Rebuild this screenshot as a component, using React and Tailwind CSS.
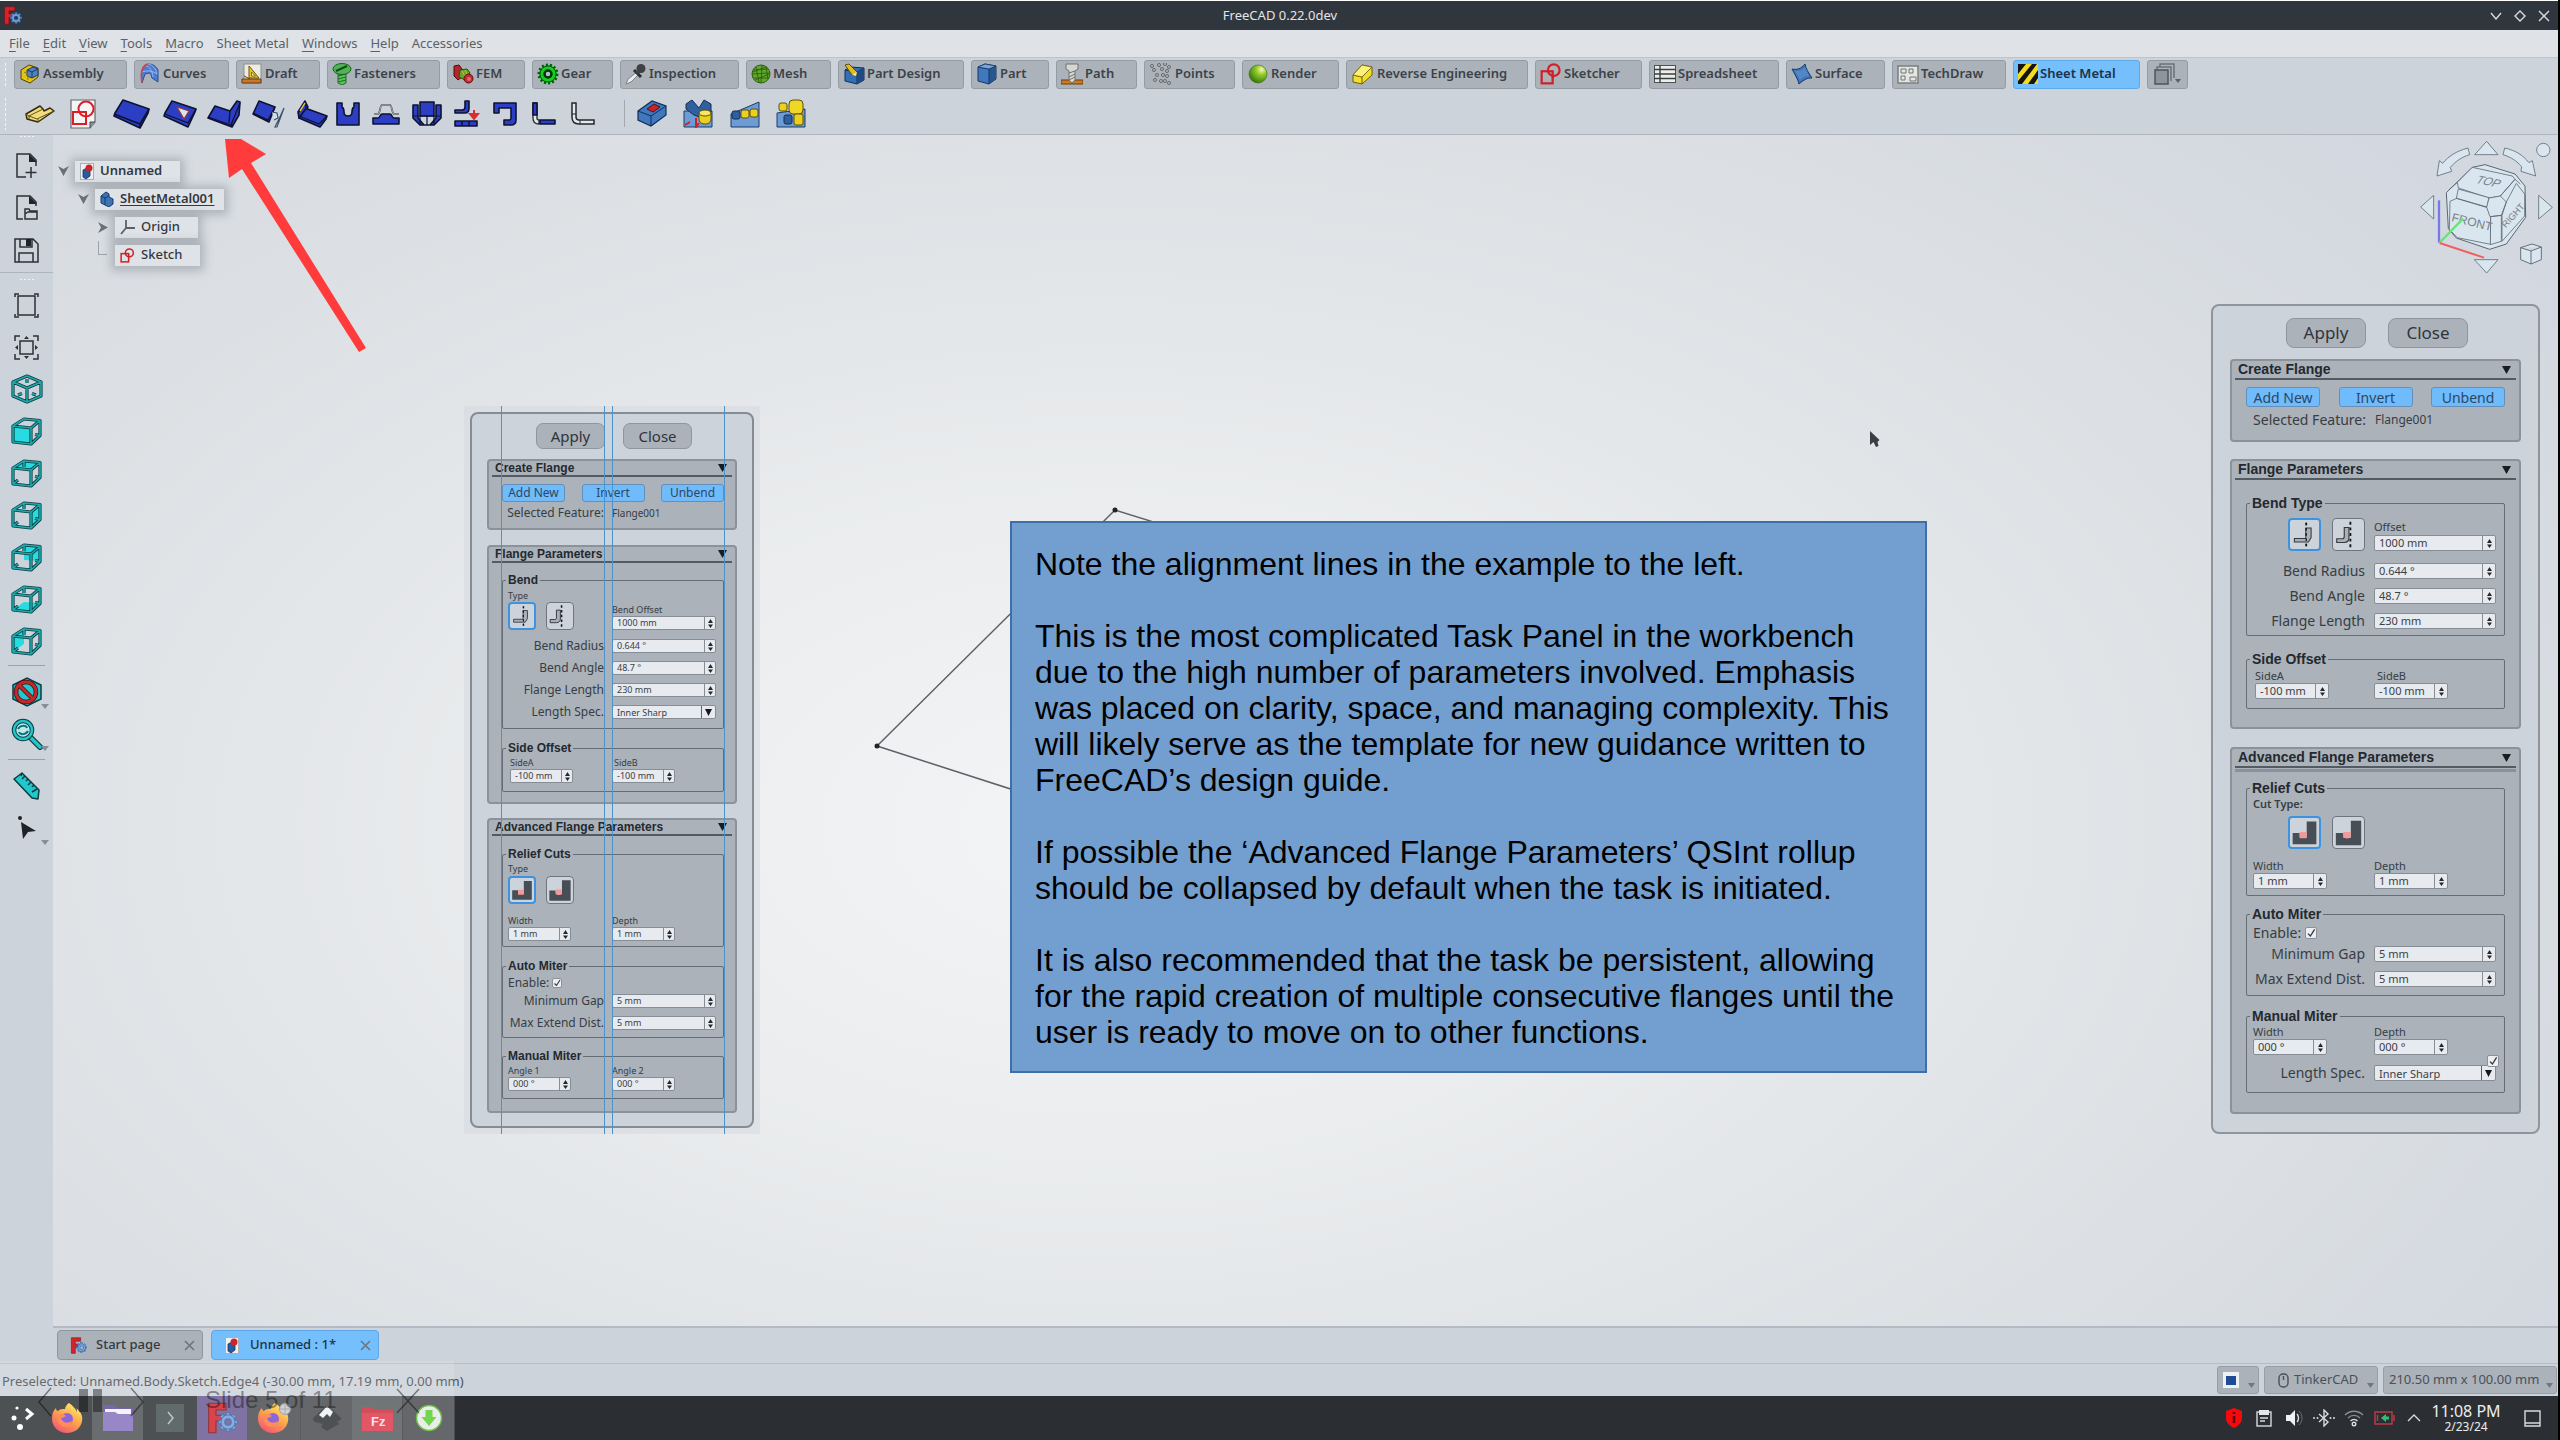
import React from "react";

const NOTO = "font-['Noto_Sans',sans-serif]";
const SANS = "font-['Liberation_Sans',sans-serif]";

function Svg({ w, h, children, className = "" }) {
  return (
    <svg
      width={w}
      height={h}
      viewBox={`0 0 ${w} ${h}`}
      fill="none"
      className={`shrink-0 ${className}`}
      aria-hidden="true"
    >
      {children}
    </svg>
  );
}

/* ---------- shared icons ---------- */

function FreeCadLogo({ size = 20 }) {
  const teeth = [0, 45, 90, 135, 180, 225, 270, 315];
  return (
    <svg width={size} height={size} viewBox="0 0 24 24" fill="none" className="shrink-0" aria-hidden="true">
      <path d="M2 1h13v5H7.500v4H13v4.500H7.500V23H2z" fill="#d3242c" stroke="#7c1218" strokeWidth="0.8" />
      <g transform="translate(16.500 15)">
        {teeth.map((a) => (
          <rect key={a} x="-1.300" y="-7" width="2.600" height="4" fill="#6ea0dc" stroke="#2d5ba0" strokeWidth="0.6" transform={`rotate(${a})`} />
        ))}
        <circle r="3.900" stroke="#2d5ba0" strokeWidth="3.400" />
        <circle r="3.900" stroke="#6ea0dc" strokeWidth="2.200" />
      </g>
    </svg>
  );
}

function DocIcon() {
  return (
    <Svg w={14} h={17}>
      <rect x="0.500" y="0.500" width="13" height="16" fill="#eef0f2" stroke="#aab0b8" />
      <path d="M3 7l4-2 3 2v6l-4 3-3-2z" fill="#2a5a9c" stroke="#17345f" strokeWidth="0.8" />
      <circle cx="9" cy="5" r="3.500" fill="#c8252c" />
    </Svg>
  );
}

function SketchIcon({ size = 20 }) {
  return (
    <svg width={size} height={size} viewBox="0 0 20 20" fill="none" className="shrink-0" aria-hidden="true">
      <rect x="1.500" y="7.500" width="10" height="11" stroke="#cf2027" strokeWidth="2" />
      <circle cx="12.500" cy="6.500" r="5.300" stroke="#cf2027" strokeWidth="2" />
      <path d="M11.500 8v7" stroke="#cf2027" strokeWidth="1.500" />
    </svg>
  );
}

/* ---------- workbench tabs ---------- */

const wbIcons = {
  Assembly: (
    <Svg w={22} h={22}>
      <path d="M2 7l8-5 9 3v9l-8 6-9-4z" fill="#e4c317" stroke="#4d4208" />
      <path d="M8 7l6-3 5 2v6l-6 3-5-2z" fill="#4c83c4" stroke="#1c3a66" />
      <path d="M8 7l5 2 6-3M13 9v6" stroke="#1c3a66" />
      <path d="M5 9l4 2v6" stroke="#8a760c" />
    </Svg>
  ),
  Curves: (
    <Svg w={22} h={22}>
      <path d="M3 20C1 8 4 2 9 1c5 0 8 2 10 6v12l-6-4c-1-3-1-4-3-5l-4 1z" fill="#4c7ccf" stroke="#2b4f98" />
      <path d="M7 3c4 1 6 4 7 11M3 9c5-2 11-1 15 2M9 1c5 1 8 5 9 10" stroke="#9db9ee" />
      <path d="M3 20C1 8 4 2 9 1" stroke="#d0454d" strokeWidth="1.500" />
    </Svg>
  ),
  Draft: (
    <Svg w={22} h={22}>
      <rect x="3" y="1" width="17" height="19" fill="#ecece4" stroke="#8d8f8c" />
      <path d="M8 3v12h10z" fill="#ecc51c" stroke="#6d5706" />
      <path d="M10.500 9v4h4z" fill="#ecece4" stroke="#6d5706" strokeWidth="0.8" />
      <path d="M1 16h19v4H1zM3 13l6 3" fill="#c9772c" stroke="#6b3a0c" />
    </Svg>
  ),
  Fasteners: (
    <Svg w={20} h={22}>
      <path d="M6 9h8v11l-4 2-4-2z" fill="#58c35c" stroke="#1e6b23" />
      <path d="M6 13l8-2M6 16l8-2M6 19l8-2" stroke="#1e6b23" />
      <ellipse cx="10" cy="6" rx="9" ry="5.500" fill="#4fb454" stroke="#1b5f20" />
      <path d="M4 8l11-5" stroke="#16491a" strokeWidth="2" />
    </Svg>
  ),
  FEM: (
    <Svg w={22} h={22}>
      <path d="M2 3l5-1 3 4v8l-4 3-4-4z" fill="#b3262c" stroke="#4e0d10" />
      <path d="M8 7l7-1 3 4-5 7-6-3z" fill="#66a52d" stroke="#2c4c10" />
      <path d="M10 8l4 7M13 7l3 6" stroke="#c9c52a" />
      <circle cx="16.500" cy="15.500" r="4.500" fill="#c62a30" stroke="#5a1013" />
      <circle cx="17" cy="16" r="2" fill="#e0686c" />
    </Svg>
  ),
  Gear: (
    <Svg w={22} h={22}>
      <circle cx="11" cy="11" r="9" fill="#12c51d" stroke="#075b0c" strokeWidth="3" strokeDasharray="2 2" />
      <circle cx="11" cy="11" r="8" fill="#14cf20" stroke="#075b0c" />
      <circle cx="11" cy="11" r="3.500" fill="#b6bdc5" stroke="#03330a" strokeWidth="2.500" />
    </Svg>
  ),
  Inspection: (
    <Svg w={22} h={22}>
      <path d="M12 9L3 16l-2 5 5-2 8-8z" fill="#e9ebec" stroke="#7c8287" />
      <path d="M9 7l7 7" stroke="#2a2e30" strokeWidth="3" />
      <circle cx="16" cy="5.500" r="4.500" fill="#3d4245" />
      <path d="M12 7l3 3" stroke="#3d4245" strokeWidth="5" />
    </Svg>
  ),
  Mesh: (
    <Svg w={20} h={20}>
      <circle cx="10" cy="10" r="9" fill="#5fa82c" stroke="#2f5c12" />
      <path d="M2 6l15-1M1 10l18-1M2 14l16 0M5 3l3 15M11 1l-1 18M15 3l2 12M2 8l13-5M4 16l14-6" stroke="#315f13" strokeWidth="0.9" />
    </Svg>
  ),
  "Part Design": (
    <Svg w={22} h={22}>
      <path d="M2 7l6-3 13 1v12l-7 4-12-3z" fill="#346fb5" stroke="#122f58" />
      <path d="M2 7l12 2 7-4M14 9v12" stroke="#122f58" />
      <path d="M14 9l7-4v12l-7 4z" fill="#1f4a83" />
      <path d="M2 2l4-1 8 8-1 4-4-1z" fill="#e3bd20" stroke="#5d4a06" />
      <path d="M9 12l4 1 1-4" fill="#eee3c0" />
    </Svg>
  ),
  Part: (
    <Svg w={22} h={22}>
      <path d="M2 4l7-3 11 2v13l-7 5-11-3z" fill="#3f78bd" stroke="#163763" />
      <path d="M13 6l7-3v13l-7 5z" fill="#28568f" />
      <path d="M2 4l11 2 7-3M13 6v15" stroke="#163763" />
      <path d="M2 4l7-3 11 2-7 3z" fill="#7aa6dc" stroke="#163763" strokeWidth="0.8" />
    </Svg>
  ),
  Path: (
    <Svg w={22} h={22}>
      <path d="M0 17h22v4H0z" fill="#cc7a23" stroke="#6b3c09" />
      <path d="M5 1h12v5l-3 2v9l-3 3-3-3V8L5 6z" fill="#d6d7d2" stroke="#6f736e" />
      <path d="M8 10l6-2M8 14l6-3M8 17l6-3" stroke="#6f736e" />
    </Svg>
  ),
  Points: (
    <Svg w={24} h={22}>
      {[[3, 3], [10, 2], [16, 1], [20, 4], [5, 7], [13, 6], [18, 8], [8, 12], [14, 12], [18, 13], [6, 17], [12, 18], [16, 18], [20, 20]].map(([x, y]) => (
        <circle key={`${x}-${y}`} cx={x} cy={y} r="1.600" fill="#a6acb0" stroke="#6b7175" />
      ))}
    </Svg>
  ),
  Render: (
    <Svg w={22} h={20}>
      <defs>
        <radialGradient id="renderBall" cx="0.7" cy="0.25" r="0.85">
          <stop offset="0" stopColor="#fff3b0" />
          <stop offset="0.35" stopColor="#8fce2b" />
          <stop offset="1" stopColor="#2d6a07" />
        </radialGradient>
      </defs>
      <circle cx="11" cy="10" r="9" fill="url(#renderBall)" stroke="#3a6b12" strokeWidth="0.6" />
    </Svg>
  ),
  "Reverse Engineering": (
    <Svg w={24} h={22}>
      <path d="M2 12l9-10 10 2v8l-10 9-9-2z" fill="#f3df2a" stroke="#6b6108" />
      <path d="M2 12l9 2 10-10M11 14v7" stroke="#6b6108" />
      <path d="M2 12l9-10 10 2-10 10z" fill="#fbf07a" stroke="#6b6108" strokeWidth="0.8" />
    </Svg>
  ),
  Sketcher: <SketchIcon size={22} />,
  Spreadsheet: (
    <Svg w={22} h={18}>
      <rect x="0.500" y="0.500" width="21" height="17" fill="#eceeec" stroke="#4c5355" />
      <path d="M0 4.500h22M0 9h22M0 13.500h22M6 0v18" stroke="#394042" strokeWidth="1.400" />
    </Svg>
  ),
  Surface: (
    <Svg w={22} h={22}>
      <path d="M1 6c5 1 9 0 13-5 1 5 3 8 7 14-5 0-7 1-13 6-1-5-4-9-7-15z" fill="#3e74b8" stroke="#173a6b" />
      <path d="M4 8c5 0 7-1 10-4l4 9c-4 0-6 1-9 4z" fill="#6898d3" opacity="0.5" />
    </Svg>
  ),
  TechDraw: (
    <Svg w={22} h={19}>
      <rect x="1" y="1" width="20" height="17" fill="#e5e6e1" stroke="#7a7f80" strokeWidth="1.500" />
      <path d="M4 4h5v4H4zM12 4h4v4h-4zM4 11h4v4H4zM13 12h6v4h-6z" stroke="#6f7475" />
    </Svg>
  ),
  "Sheet Metal": (
    <Svg w={20} h={20}>
      <rect width="20" height="20" fill="#161510" />
      <path d="M0 10L8 0h6L0 17zM4 20L19 0h1v6L10 20zM16 20l4-6v6z" fill="#f2dc1d" />
    </Svg>
  ),
};

const workbenches = [
  ["Assembly", "w-[113px]"],
  ["Curves", "w-[95px]"],
  ["Draft", "w-[84px]"],
  ["Fasteners", "w-[113px]"],
  ["FEM", "w-[78px]"],
  ["Gear", "w-[81px]"],
  ["Inspection", "w-[119px]"],
  ["Mesh", "w-[85px]"],
  ["Part Design", "w-[126px]"],
  ["Part", "w-[78px]"],
  ["Path", "w-[81px]"],
  ["Points", "w-[91px]"],
  ["Render", "w-[97px]"],
  ["Reverse Engineering", "w-[182px]"],
  ["Sketcher", "w-[107px]"],
  ["Spreadsheet", "w-[130px]"],
  ["Surface", "w-[99px]"],
  ["TechDraw", "w-[114px]"],
  ["Sheet Metal", "w-[127px]"],
];

/* ---------- tool bar ---------- */

const B = { fill: "#2c3fc4", stroke: "#0d1233", strokeWidth: 1.6, strokeLinejoin: "round" };

const tools = [
  ["Make base wall", "w-[44px]", (
    <Svg w={30} h={26}>
      <path d="M1 13l14-8 3 3 1 2 6-3 4 3-16 11-11-3z" fill="#f3dc7e" stroke="#332b0d" strokeWidth="1.500" strokeLinejoin="round" />
      <path d="M1 13l3 2 14-7M4 15l8 3 17-8M4 15v3M13 18v3" stroke="#5e5120" />
    </Svg>
  )],
  ["New sketch", "w-[42px]", (
    <Svg w={26} h={30}>
      <path d="M1 1h24v22l-5 6H1z" fill="#f4f5f6" stroke="#63686d" strokeWidth="1.200" />
      <path d="M25 23h-5v6" fill="#8d9398" stroke="#42474b" />
      <rect x="3" y="13" width="13" height="12" stroke="#da1f26" strokeWidth="2" />
      <circle cx="16" cy="10" r="7.500" stroke="#da1f26" strokeWidth="2" />
      <path d="M16 13v9" stroke="#da1f26" strokeWidth="1.500" />
    </Svg>
  )],
  ["Make wall", "w-[54px]", (
    <Svg w={38} h={30}>
      <path d="M11 1l26 9-1 4-8 15-26-12 1-3z" {...B} />
      <path d="M2 15l26 10 9-15M28 25v4" stroke="#0d1233" strokeWidth="1.500" />
    </Svg>
  )],
  ["Cut", "w-[44px]", (
    <Svg w={34} h={28}>
      <path d="M9 1l24 8-1 3-7 15-24-11 1-3z" {...B} />
      <path d="M2 14l23 9 8-14" stroke="#0d1233" strokeWidth="1.300" />
      <path d="M14 7l12 4-5 8z" fill="#dfe3e8" stroke="#8a3a3c" strokeWidth="1.200" />
    </Svg>
  )],
  ["Make flange", "w-[44px]", (
    <Svg w={34} h={28}>
      <path d="M8 6l15 5 7-10 3 1-1 13-7 12L1 18z" {...B} />
      <path d="M23 11l-1 12M1 17l23 8 9-22M25 24v3" stroke="#0d1233" strokeWidth="1.300" />
    </Svg>
  )],
  ["Extend face", "w-[46px]", (
    <Svg w={34} h={28}>
      <path d="M7 1l16 6-6 15L1 14z" {...B} />
      <path d="M1 13l15 7 7-13" stroke="#0d1233" strokeWidth="1.200" />
      <path d="M20 12l5 1 1 5-4 2M32 8l-5 11-4 8 2 0z" fill="#cfe0ee" stroke="#3a5166" strokeWidth="1.200" />
    </Svg>
  )],
  ["Fold wall", "w-[40px]", (
    <Svg w={31} h={28}>
      <path d="M8 8l22 8-1 3-6 8L2 18z" {...B} />
      <path d="M2 18L1 12 8 1l3 6-3 3z" {...B} />
      <path d="M2 16l20 8 8-8M2 12L8 3l1 5" stroke="#0d1233" strokeWidth="1.200" />
      <path d="M3 11l5-8" stroke="#e2c33b" strokeWidth="1.500" />
    </Svg>
  )],
  ["Unfold", "w-[32px]", (
    <Svg w={24} h={24}>
      <path d="M1 1h5v4c2 1 2 3 2 5 0 3 1 4 4 4s4-1 4-4c0-2 0-4 2-5V1h5v22H1z" {...B} />
    </Svg>
  )],
  ["Corner relief", "w-[44px]", (
    <Svg w={28} h={22}>
      <path d="M1 21v-6h5c2 0 2-4 4-4h8c2 0 2 4 4 4h5v6z" {...B} />
      <path d="M2 11h4c2 0 2-9 4-9h8c2 0 2 9 4 9h5" stroke="#20242c" strokeWidth="1.600" />
      <path d="M2 11h4c2 0 2-9 4-9h8c2 0 2 9 4 9h5" stroke="#e9edf2" strokeWidth="0.7" />
    </Svg>
  )],
  ["Relief", "w-[38px]", (
    <Svg w={30} h={25}>
      <path d="M8 1h14v14H8zM1 4h5v13l6 7h6l6-7V4h5v13l-7 7H8l-7-7z" {...B} />
      <path d="M1 15h28M8 15v9M22 15v9M15 15v9" stroke="#0d1233" strokeWidth="1.200" />
    </Svg>
  )],
  ["Make junction", "w-[42px]", (
    <Svg w={26} h={27}>
      <path d="M11 1h4v7c0 3-1 5-4 5H1v-3h7c2 0 3-1 3-3z" {...B} />
      <path d="M1 21h22v5H1zM8 21v5M15 21v5" {...B} />
      <path d="M20 10v9M16 14l4 5 4-5z" fill="#df2a2f" stroke="#df2a2f" strokeWidth="2" />
    </Svg>
  )],
  ["Make bend", "w-[34px]", (
    <Svg w={24} h={24}>
      <path d="M1 1h22v17c0 3-2 5-5 5h-7v-5h5c2 0 2-1 2-2V6H6v5H1z" {...B} />
    </Svg>
  )],
  ["Sketch on sheet", "w-[44px]", (
    <Svg w={24} h={24}>
      <path d="M1 1h4v15c0 2 1 2 2 2v4c-4 0-6-2-6-6z" fill="#e4e8ee" stroke="#30343a" strokeWidth="1.400" />
      <path d="M8 18h15v4H8zM1 1h4v12H1z" {...B} />
    </Svg>
  )],
  ["Extrude", "w-[34px]", (
    <Svg w={24} h={24}>
      <path d="M1 1h4v14c0 2 1 3 3 3h15v4H8c-5 0-7-2-7-7z" fill="#e4e8ee" stroke="#23272d" strokeWidth="1.500" />
      <path d="M1 12h4M9 18v4" stroke="#23272d" />
    </Svg>
  )],
];

const partTools = [
  ["Pocket", "w-[44px]", (
    <Svg w={30} h={27}>
      <path d="M1 11L15 1l14 5v9L14 26 1 20z" fill="#3f78bd" stroke="#122f58" strokeWidth="1.200" />
      <path d="M1 11l13 5L29 6M14 16v10" stroke="#122f58" />
      <path d="M10 9l7-5 6 3-7 5z" fill="#c9222a" stroke="#5a0e12" />
    </Svg>
  )],
  ["Mirrored", "w-[48px]", (
    <Svg w={30} h={29}>
      <path d="M1 12h28v16H1z" fill="#6c9cd3" stroke="#1c3a66" />
      <path d="M3 5l6-4 7 8 5-8 7 4v8l-9 6-8-3-8-6z" fill="#2f5f9f" stroke="#122f58" />
      <rect x="16" y="11" width="12" height="14" rx="5" fill="#ecd021" stroke="#5d5006" />
      <ellipse cx="22" cy="14" rx="6" ry="3" fill="#f7e56a" stroke="#5d5006" />
      <path d="M13 19v9l3-4M2 26l5-3" stroke="#cf2027" strokeWidth="2" />
    </Svg>
  )],
  ["Linear pattern", "w-[46px]", (
    <Svg w={30} h={28}>
      <path d="M1 27V14L29 2v25z" fill="#6c9cd3" stroke="#1c3a66" />
      <rect x="2" y="11" width="8" height="8" rx="2" fill="#2f5f9f" stroke="#122f58" />
      <rect x="11" y="10" width="8" height="8" rx="2" fill="#ecd021" stroke="#5d5006" />
      <rect x="20" y="9" width="8" height="8" rx="2" fill="#ecd021" stroke="#5d5006" />
    </Svg>
  )],
  ["Multi transform", "w-[46px]", (
    <Svg w={30} h={29}>
      <path d="M1 28V14l28-4v18z" fill="#6c9cd3" stroke="#1c3a66" />
      <rect x="13" y="1" width="14" height="14" rx="4" fill="#f0d625" stroke="#5d5006" />
      <rect x="3" y="4" width="8" height="8" rx="2" fill="#ecd021" stroke="#5d5006" />
      <rect x="8" y="16" width="8" height="9" rx="2" fill="#2f5f9f" stroke="#122f58" />
      <rect x="18" y="15" width="9" height="11" rx="2" fill="#ecd021" stroke="#5d5006" />
    </Svg>
  )],
];

/* ---------- side bar ---------- */

function ViewCubeIcon({ face }) {
  const faces = {
    front: "M2 10l18 2v16L2 26z",
    top: "M2 10L13 3l16 1-9 8z",
    right: "M20 12l9-7v15l-9 8z",
    rear: "M13 4l16 1v14l-16-1z",
    bottom: "M2 26l11-8 16 1-9 9z",
    left: "M2 10l11-7v15L2 26z",
  };
  const solid = face === "front";
  const edges = `M2 10l11-7 16 1.500v15L20 28 2 26zM2 10l18 2v16M20 12l9-7.500${solid ? "" : "M13 3v6M2 26l5-4"}M29 19.500l-5-1`;
  return (
    <Svg w={32} h={31}>
      <path d={faces[face]} fill="#27dbe0" />
      <path d={edges} stroke="#0b3d40" strokeWidth="3.200" strokeLinejoin="round" />
      <path d={edges} stroke="#1fa9ad" strokeWidth="1.600" strokeLinejoin="round" />
    </Svg>
  );
}

function IsoIcon() {
  const d = "M2 9l14-6 14 6v14l-14 6L2 23zM2 9l14 6 14-6M16 15v14M16 6v4M7 22l4-1.500M25 22l-4-1.500";
  return (
    <Svg w={32} h={32}>
      <path d={d} stroke="#0b3d40" strokeWidth="3.200" strokeLinejoin="round" />
      <path d={d} stroke="#1fa9ad" strokeWidth="1.600" strokeLinejoin="round" />
    </Svg>
  );
}

const K = { stroke: "#2c3136", strokeWidth: 1.5 };

const sideGroups = [
  [
    ["New", <Svg w={22} h={26}><path d="M10 24H1V1h13l6 6v6" {...K} /><path d="M13 1l8 8h-8z" fill="#1f2327" /><path d="M15 14v11M9.500 19.500h11" {...K} /></Svg>],
    ["Open", <Svg w={22} h={26}><path d="M7 24H1V1h13l6 6v4" {...K} /><path d="M13 1l8 8h-8z" fill="#1f2327" /><path d="M9 14h4l1 2h7v8H9zM9 19l3-2h9" {...K} /></Svg>],
    ["Save", <Svg w={25} h={25}><path d="M1 1h18l5 5v18H1zM6 1v8h12V1M5 24v-9h14v9" {...K} /><path d="M12 1h5v7h-5z" fill="#1f2327" /></Svg>],
  ],
  [
    ["Fit all", <Svg w={25} h={25}><rect x="4" y="3" width="17" height="19" {...K} /><path d="M1 4V1h4M20 1h4v3M1 21v3h4M20 24h4v-3" {...K} /></Svg>],
    ["Fit selection", <Svg w={25} h={25}><rect x="6" y="6" width="13" height="13" {...K} /><path d="M1 6V1h5M19 1h5v5M1 19v5h5M19 24h5v-5" {...K} /><path d="M10 4l2.500-3L15 4zM10 21l2.500 3 2.500-3zM4 10l-3 2.500L4 15zM21 10l3 2.500-3 2.500z" fill="#2c3136" /></Svg>],
    ["Isometric", <IsoIcon />],
    ["Front", <ViewCubeIcon face="front" />],
    ["Top", <ViewCubeIcon face="top" />],
    ["Right", <ViewCubeIcon face="right" />],
    ["Rear", <ViewCubeIcon face="rear" />],
    ["Bottom", <ViewCubeIcon face="bottom" />],
    ["Left", <ViewCubeIcon face="left" />],
  ],
  [
    ["Draw style", <Svg w={32} h={32}><path d="M2 9l14-7 14 7v14l-14 7L2 23z" fill="#22c7cc" stroke="#0b3d40" strokeWidth="1.500" /><circle cx="15" cy="16" r="10" stroke="#4a0a0c" strokeWidth="4.500" /><path d="M8 9l14 14" stroke="#4a0a0c" strokeWidth="4.500" /><circle cx="15" cy="16" r="10" stroke="#c3282d" strokeWidth="3" /><path d="M8 9l14 14" stroke="#c3282d" strokeWidth="3" /></Svg>, true],
    ["Zoom", <Svg w={32} h={32}><path d="M19 19l10 10" stroke="#0b3d40" strokeWidth="6" strokeLinecap="round" /><path d="M19 19l10 10" stroke="#22c7cc" strokeWidth="3.500" strokeLinecap="round" /><circle cx="12" cy="12" r="9" fill="#b9e9ec" stroke="#0b3d40" strokeWidth="4.500" /><circle cx="12" cy="12" r="9" stroke="#22c7cc" strokeWidth="2.500" /><path d="M7 11c2-4 8-4 9-1M17 13c-2 4-8 4-9 1" stroke="#0f7074" strokeWidth="2" /></Svg>, true],
  ],
  [
    ["Measure", <Svg w={28} h={30}><path d="M1 8l8-6 17 17-1 9-6-1z" fill="#22c7cc" stroke="#0b3d40" strokeWidth="1.500" strokeLinejoin="round" /><path d="M9 2l-1 3M12 5l-3 3M15 8l-2 2M18 11l-3 3M21 14l-2 2M24 18l-5 3" stroke="#0b3d40" strokeWidth="1.500" /></Svg>],
    ["Select", <Svg w={20} h={26}><circle cx="3" cy="3" r="2" fill="#1f2327" /><path d="M4 7l15 9-8 1-5 7z" fill="#1f2327" /></Svg>, true],
  ],
];

function Grip({ vertical }) {
  return vertical ? (
    <span className="my-1 w-[3px] self-stretch bg-[radial-gradient(#f1f3f5_1px,transparent_1px)] bg-[length:3px_5px]" />
  ) : (
    <span className="mx-auto h-[4px] w-4 bg-[radial-gradient(#f1f3f5_1px,transparent_1px)] bg-[length:4px_3px]" />
  );
}

const groupGap = ["", "mt-[1px]", "mt-[3px]", "mt-[4px]"];

function SideBar() {
  return (
    <nav aria-label="View tools" className="flex w-[53px] shrink-0 flex-col bg-[#cdd3db]">
      {sideGroups.map((group, g) => (
        <div key={g} className={groupGap[g]}>
          {g > 0 && <div className={g === 1 ? "mb-[5px] h-px bg-[#aeb5be]" : "mx-2 mb-[5px] h-px bg-[#9aa2ab]"} />}
          {g < 2 && (
            <div className="flex h-[6px]">
              <Grip />
            </div>
          )}
          {g === 0 && <div className="h-[4px]" />}
          {group.map(([name, icon, menu]) => (
            <button key={name} type="button" aria-label={name} className="relative flex h-[42px] w-[53px] items-center justify-center">
              {icon}
              {menu && (
                <Svg w={8} h={5} className="absolute right-1 bottom-1">
                  <path d="M0 0h8L4 5z" fill="#868e97" />
                </Svg>
              )}
            </button>
          ))}
        </div>
      ))}
    </nav>
  );
}

/* ---------- task panels ---------- */

const LARGE = {
  action: "h-[30px] w-[80px] rounded-[8px] text-[17px]",
  title: "text-[14px] leading-[17px]",
  blue: "h-[20px] w-[74px] text-[14px]",
  label: "text-[14px] leading-[16px]",
  small: "text-[11px] leading-[14px]",
  input: "h-[16px] text-[11px]",
  spin: "w-[13px]",
  half: "w-[74px]",
  icon: "size-[33px]",
  legend: "text-[14px] leading-[16px]",
  check: "size-[12px]",
  cols: "grid grid-cols-[118px_1fr] gap-x-[9px] pr-[8px]",
};

const COMPACT = {
  action: "h-[26px] w-[69px] rounded-[7px] text-[15px]",
  title: "text-[12px] leading-[14px]",
  blue: "h-[18px] w-[63px] text-[12px]",
  label: "text-[12px] leading-[14px]",
  small: "text-[9px] leading-[12px]",
  input: "h-[14px] text-[9px]",
  spin: "w-[11px]",
  half: "w-[63px]",
  icon: "size-[28px]",
  legend: "text-[12px] leading-[14px]",
  check: "size-[10px]",
  cols: "grid grid-cols-[101px_1fr] gap-x-[8px] pr-[7px]",
};

function Spin({ s, id, label, value, className = "" }) {
  return (
    <span className={`flex overflow-hidden rounded-[2px] border border-[#868d95] bg-[#e7eaee] ${s.input} ${className}`}>
      <input id={id} aria-label={label} defaultValue={value} className="w-0 min-w-0 flex-1 bg-transparent pl-[4px] text-[#3a4046] outline-none" />
      <button type="button" aria-label={`Step ${label}`} className={`flex items-center justify-center border-l border-[#868d95] ${s.spin}`}>
        <Svg w={5} h={9}>
          <path d="M0 4l2.500-4L5 4zM0 5.500h5L2.500 9z" fill="#23282d" />
        </Svg>
      </button>
    </span>
  );
}

function Drop({ s, id }) {
  return (
    <span className={`relative flex rounded-[2px] border border-[#868d95] bg-[#e7eaee] ${s.input}`}>
      <select id={id} className="w-full appearance-none bg-transparent pl-[4px] text-[#3a4046] outline-none">
        <option>Inner Sharp</option>
      </select>
      <span className="pointer-events-none absolute inset-y-0 right-0 flex w-[14px] items-center justify-center border-l border-[#5b6269]">
        <Svg w={7} h={7}>
          <path d="M0 0h7L3.500 7z" fill="#15191d" />
        </Svg>
      </span>
    </span>
  );
}

function Check({ s, id, label }) {
  return (
    <span className={`relative inline-flex ${s.check}`}>
      <input id={id} type="checkbox" defaultChecked aria-label={label} className="peer size-full appearance-none rounded-[2px] border border-[#8a9199] bg-[#eceef1]" />
      <svg viewBox="0 0 10 10" fill="none" className="pointer-events-none absolute inset-0 size-full" aria-hidden="true">
        <path d="M2.500 5.500l2 2 3.500-5.500" stroke="#30363b" strokeWidth="1.100" />
      </svg>
    </span>
  );
}

function Row({ s, id, label, children, className = "" }) {
  return (
    <div className={`${s.cols} items-center ${className}`}>
      <label htmlFor={id} className={`text-right whitespace-nowrap ${s.label}`}>{label}</label>
      {children}
    </div>
  );
}

function Pair({ s, id, a, b, va, vb, className = "", left = "pl-[6px]", right = "" }) {
  return (
    <div className={`${s.cols} ${className}`}>
      <div className={`flex flex-col ${left}`}>
        <label htmlFor={`${id}-a`} className={s.small}>{a}</label>
        <Spin s={s} id={`${id}-a`} label={a} value={va} className={s.half} />
      </div>
      <div className="flex flex-col">
        <label htmlFor={`${id}-b`} className={`${s.small} ${right}`}>{b}</label>
        <Spin s={s} id={`${id}-b`} label={b} value={vb} className={s.half} />
      </div>
    </div>
  );
}

function Box({ s, title, children, className = "" }) {
  return (
    <fieldset className={`min-w-0 rounded-[2px] border border-[#646c75] ${className}`}>
      <legend className={`ml-[3px] px-[2px] font-bold text-[#23292f] ${SANS} ${s.legend}`}>{title}</legend>
      {children}
    </fieldset>
  );
}

function Rollup({ s, title, children, className = "" }) {
  return (
    <section className={`rounded-[4px] border-2 border-[#8b929a] bg-[#abb2ba] ${className}`}>
      <h2 className={`mx-[3px] flex items-center justify-between border-b-2 border-[#525a62] pr-[5px] pl-[3px] font-bold text-[#23292f] ${SANS} ${s.title}`}>
        {title}
        <Svg w={9} h={8}>
          <path d="M0 0h9L4.500 8z" fill="#181d22" />
        </Svg>
      </h2>
      {children}
    </section>
  );
}

function BendIcon({ outside }) {
  return (
    <svg viewBox="0 0 33 33" fill="none" className="size-full" aria-hidden="true">
      <path d="M18.500 3v27" stroke="#14181c" strokeWidth="2" strokeDasharray="3 3" />
      {outside ? (
        <path d="M4 21h6c2 0 2-1 2-3V9h5v11c0 3-2 5-5 5H4z" fill="#a9b0b8" stroke="#33383d" strokeWidth="1.200" />
      ) : (
        <path d="M5 21h13V9h6v11l-3 5H5z" fill="#a9b0b8" stroke="#33383d" strokeWidth="1.200" />
      )}
      {!outside && <path d="M18.500 3v27" stroke="#14181c" strokeWidth="1.500" strokeDasharray="3 3" />}
    </svg>
  );
}

function CutIcon({ round }) {
  return (
    <svg viewBox="0 0 33 33" fill="none" className="size-full" aria-hidden="true">
      <path d="M19 4h11v26H3V17h8v5h8z" fill="#474e55" />
      {round ? (
        <path d="M11 16h8v3a4 4 0 0 1-8 0z" fill="#f09a9b" />
      ) : (
        <path d="M11 16h8v7h-8z" fill="#f09a9b" />
      )}
    </svg>
  );
}

function IconToggle({ s, label, active, children }) {
  return (
    <button
      type="button"
      aria-label={label}
      aria-pressed={!!active}
      className={`overflow-hidden rounded-[4px] bg-[#cdd3db] ${s.icon} ${active ? "border-2 border-[#3d93e0]" : "border border-[#6e757d]"}`}
    >
      {children}
    </button>
  );
}

function Blues({ s }) {
  return ["Add New", "Invert", "Unbend"].map((t) => (
    <button key={t} type="button" className={`flex items-center justify-center rounded-[3px] border border-[#648fbb] bg-[#70bbfb] text-[#2b4763] ${s.blue}`}>
      {t}
    </button>
  ));
}

function Actions({ s }) {
  return ["Apply", "Close"].map((t) => (
    <button key={t} type="button" className={`flex items-center justify-center border border-[#8f969e] bg-[#abb2ba] text-[#2f353b] ${s.action}`}>
      {t}
    </button>
  ));
}

function LargePanel() {
  const s = LARGE;
  return (
    <form className={`w-[329px] rounded-[8px] border-2 border-[#8e959d] bg-[#cdd3db] px-[17px] pt-[12px] pb-[18px] text-[#373d43] ${NOTO}`}>
      <div className="flex justify-center gap-[22px] pl-[3px]">
        <Actions s={s} />
      </div>
      <Rollup s={s} title="Create Flange" className="mt-[11px] pb-[12px]">
        <div className="mt-[7px] flex justify-between px-[14px]">
          <Blues s={s} />
        </div>
        <div className={`${s.cols} mt-[5px] ml-[16px] items-center`}>
          <span className={`text-right whitespace-nowrap ${s.label}`}>Selected Feature:</span>
          <span className="text-[12px] leading-[16px]">Flange001</span>
        </div>
      </Rollup>
      <Rollup s={s} title="Flange Parameters" className="mt-[17px] pb-[18px]">
        <Box s={s} title="Bend Type" className="mx-[14px] mt-[15px] pb-[6px]">
          <div className={`${s.cols} mt-[7px] items-end`}>
            <div className="flex justify-end gap-[11px]">
              <IconToggle s={s} label="Material inside" active><BendIcon /></IconToggle>
              <IconToggle s={s} label="Material outside"><BendIcon outside /></IconToggle>
            </div>
            <div className="flex flex-col gap-[1px]">
              <label htmlFor="r-offset" className={s.small}>Offset</label>
              <Spin s={s} id="r-offset" label="Offset" value="1000 mm" />
            </div>
          </div>
          <Row s={s} id="r-radius" label="Bend Radius" className="mt-[12px]"><Spin s={s} id="r-radius" label="Bend Radius" value="0.644 °" /></Row>
          <Row s={s} id="r-angle" label="Bend Angle" className="mt-[9px]"><Spin s={s} id="r-angle" label="Bend Angle" value="48.7 °" /></Row>
          <Row s={s} id="r-length" label="Flange Length" className="mt-[9px]"><Spin s={s} id="r-length" label="Flange Length" value="230 mm" /></Row>
        </Box>
        <Box s={s} title="Side Offset" className="mx-[14px] mt-[15px] pb-[9px]">
          <Pair s={s} id="r-side" a="SideA" b="SideB" va="-100 mm" vb="-100 mm" className="mt-[2px]" left="pl-[8px]" right="pl-[3px]" />
        </Box>
      </Rollup>
      <Rollup s={s} title="Advanced Flange Parameters" className="mt-[18px] pb-[19px]">
        <div className="mx-[3px] mt-px h-[3px] bg-[#89919a]" />
        <Box s={s} title="Relief Cuts" className="mx-[14px] mt-[8px] pb-[6px]">
          <div className={`mt-px ml-[6px] font-semibold ${s.small}`}>Cut Type:</div>
          <div className={`${s.cols} mt-[5px]`}>
            <div className="flex justify-end gap-[11px]">
              <IconToggle s={s} label="Rectangle relief" active><CutIcon /></IconToggle>
              <IconToggle s={s} label="Round relief"><CutIcon round /></IconToggle>
            </div>
          </div>
          <Pair s={s} id="r-relief" a="Width" b="Depth" va="1 mm" vb="1 mm" className="mt-[10px]" />
        </Box>
        <Box s={s} title="Auto Miter" className="mx-[14px] mt-[10px] pb-[8px]">
          <div className="mt-[3px] ml-[6px] flex items-center gap-[4px]">
            <label htmlFor="r-enable" className={s.label}>Enable:</label>
            <Check s={s} id="r-enable" label="Enable" />
          </div>
          <Row s={s} id="r-gap" label="Minimum Gap" className="mt-[5px]"><Spin s={s} id="r-gap" label="Minimum Gap" value="5 mm" /></Row>
          <Row s={s} id="r-ext" label="Max Extend Dist." className="mt-[9px]"><Spin s={s} id="r-ext" label="Max Extend Dist." value="5 mm" /></Row>
        </Box>
        <Box s={s} title="Manual Miter" className="relative mx-[14px] mt-[12px] pb-[11px]">
          <Pair s={s} id="r-miter" a="Width" b="Depth" va="000 °" vb="000 °" className="mt-[1px]" />
          <span className="absolute top-[31px] right-[5px] z-10 flex">
            <Check s={s} id="r-manual" label="Manual miter" />
          </span>
          <Row s={s} id="r-spec" label="Length Spec." className="mt-[10px]"><Drop s={s} id="r-spec" /></Row>
        </Box>
      </Rollup>
    </form>
  );
}

function CompactPanel() {
  const s = COMPACT;
  const box = "ml-[13px] mr-[11px]";
  return (
    <form className={`w-[284px] rounded-[8px] border-2 border-[#858c94] bg-[#cdd3db] px-[15px] pt-[9px] pb-[13px] text-[#373d43] ${NOTO}`}>
      <div className="flex justify-center gap-[18px] pl-[4px]">
        <Actions s={s} />
      </div>
      <Rollup s={s} title="Create Flange" className="mt-[10px] pb-[8px]">
        <div className="mt-[7px] mr-[11px] ml-[13px] flex justify-between">
          <Blues s={s} />
        </div>
        <div className={`${s.cols} mt-[4px] ml-[14px] items-center`}>
          <span className={`text-right whitespace-nowrap ${s.label}`}>Selected Feature:</span>
          <span className="text-[10px] leading-[14px]">Flange001</span>
        </div>
      </Rollup>
      <Rollup s={s} title="Flange Parameters" className="mt-[15px] pb-[10px]">
        <Box s={s} title="Bend" className={`${box} mt-[10px] pb-[9px]`}>
          <div className={`${s.cols} mt-[3px] items-end`}>
            <div className="pl-[5px]">
              <div className={s.small}>Type</div>
              <div className="flex gap-[10px]">
                <IconToggle s={s} label="Material inside" active><BendIcon /></IconToggle>
                <IconToggle s={s} label="Material outside"><BendIcon outside /></IconToggle>
              </div>
            </div>
            <div className="flex flex-col">
              <label htmlFor="l-offset" className={s.small}>Bend Offset</label>
              <Spin s={s} id="l-offset" label="Bend Offset" value="1000 mm" />
            </div>
          </div>
          <Row s={s} id="l-radius" label="Bend Radius" className="mt-[9px]"><Spin s={s} id="l-radius" label="Bend Radius" value="0.644 °" /></Row>
          <Row s={s} id="l-angle" label="Bend Angle" className="mt-[8px]"><Spin s={s} id="l-angle" label="Bend Angle" value="48.7 °" /></Row>
          <Row s={s} id="l-length" label="Flange Length" className="mt-[8px]"><Spin s={s} id="l-length" label="Flange Length" value="230 mm" /></Row>
          <Row s={s} id="l-spec" label="Length Spec." className="mt-[8px]"><Drop s={s} id="l-spec" /></Row>
        </Box>
        <Box s={s} title="Side Offset" className={`${box} mt-[12px] pb-[8px]`}>
          <Pair s={s} id="l-side" a="SideA" b="SideB" va="-100 mm" vb="-100 mm" className="mt-[2px]" left="pl-[7px]" right="pl-[2px]" />
        </Box>
      </Rollup>
      <Rollup s={s} title="Advanced Flange Parameters" className="mt-[14px] pb-[12px]">
        <Box s={s} title="Relief Cuts" className={`${box} mt-[11px] pb-[5px]`}>
          <div className="mt-[2px] pl-[5px]">
            <div className={s.small}>Type</div>
            <div className="mt-px flex gap-[10px]">
              <IconToggle s={s} label="Rectangle relief" active><CutIcon /></IconToggle>
              <IconToggle s={s} label="Round relief"><CutIcon round /></IconToggle>
            </div>
          </div>
          <Pair s={s} id="l-relief" a="Width" b="Depth" va="1 mm" vb="1 mm" className="mt-[11px]" left="pl-[5px]" />
        </Box>
        <Box s={s} title="Auto Miter" className={`${box} mt-[12px] pb-[7px]`}>
          <div className="mt-[3px] ml-[5px] flex items-center gap-[3px]">
            <label htmlFor="l-enable" className={s.label}>Enable:</label>
            <Check s={s} id="l-enable" label="Enable" />
          </div>
          <Row s={s} id="l-gap" label="Minimum Gap" className="mt-[4px]"><Spin s={s} id="l-gap" label="Minimum Gap" value="5 mm" /></Row>
          <Row s={s} id="l-ext" label="Max Extend Dist." className="mt-[8px]"><Spin s={s} id="l-ext" label="Max Extend Dist." value="5 mm" /></Row>
        </Box>
        <Box s={s} title="Manual Miter" className={`${box} mt-[11px] pb-[7px]`}>
          <Pair s={s} id="l-miter" a="Angle 1" b="Angle 2" va="000 °" vb="000 °" className="mt-[2px]" left="pl-[5px]" />
        </Box>
      </Rollup>
    </form>
  );
}

/* ---------- canvas ---------- */

function NavCube() {
  const f = { fill: "#d9e6f0", stroke: "#5c6770", strokeWidth: 2.4, strokeLinejoin: "round" };
  return (
    <svg width="180" height="170" viewBox="0 0 540 510" fill="none" className="absolute top-[-15px] right-0" aria-hidden="true">
      <path d="M320 64l34 40h-70zM122 261l39-35v71zM517 262l-41-36v71zM320 459l34-40h-71z" {...f} />
      <path d="M264 84l5 20c-26 8-42 20-58 38l4 12-44 14 7-46 10 8c18-22 40-36 76-46zM374 84l-5 20c26 8 42 20 56 36l-2 14 44 14-10-46-10 6c-18-22-38-36-73-44z" {...f} />
      <circle cx="490" cy="90" r="20" {...f} />
      <path d="M277 142l38-8 90 28 30 36 2 94-58 80-50 16-100-34-24-28-6-108z" {...f} strokeWidth="3" />
      <path d="M232 187l45-45 120 26 8 10-44 50-34 6-92-30z" {...f} />
      <path d="M235 207l92 26-6 28-92-26zM210 244l20-9 92 28 10 26v84l-100-20-24-25z" {...f} />
      <path d="M332 290l32-4v78l-33 10zM327 234l34-6 18 18-15 40-34 4-10-28zM379 246l30-56 25 32v66l-68 76v-78z" {...f} />
      <path d="M206 210l26-23M361 228l44-50 16 14" stroke="#5c6770" strokeWidth="2.400" />
      <g className={SANS} fill="#77828b">
        <text transform="translate(284 188) rotate(12) skewX(-22)" fontSize="35">TOP</text>
        <text transform="translate(213 303) rotate(14)" fontSize="36">FRONT</text>
        <text transform="translate(377 325) rotate(-48)" fontSize="28">RIGHT</text>
      </g>
      <path d="M177 241v127" stroke="#7878e8" strokeWidth="7" />
      <path d="M179 368l70-72" stroke="#6be37a" strokeWidth="7" />
      <path d="M179 369l133 44" stroke="#ee5f60" strokeWidth="6" />
      <path d="M422 383l34-11 28 9v38l-31 13-31-13zM422 383l31 10 31-12M453 393v39" {...f} stroke="#4c555d" />
    </svg>
  );
}

function TreeItem({ className, arrow, icon, pad = "pr-[18px]", children }) {
  return (
    <li className={`flex h-[28px] items-center ${className}`}>
      <span className="flex w-[17px] items-center">{arrow}</span>
      <span className={`flex h-[21px] items-center gap-[6px] bg-[#dfe3e7] pl-[5px] text-[13px] text-[#33393f] shadow-[0_1px_10px_4px_rgba(110,118,128,0.4)] ${pad}`}>
        {icon}
        {children}
      </span>
    </li>
  );
}

const Down = (
  <Svg w={11} h={10}>
    <path d="M0 0l5.500 3L11 0 5.500 10z" fill="#6a7179" />
  </Svg>
);

function Tree() {
  return (
    <ul className={`relative pt-[22px] font-medium ${NOTO}`}>
      <TreeItem className="pl-[5px]" arrow={Down} icon={<DocIcon />}>
        <span className="font-semibold">Unnamed</span>
      </TreeItem>
      <TreeItem
        className="pl-[25px]"
        pad="pr-[10px]"
        arrow={Down}
        icon={<Svg w={14} h={16}><path d="M1 5l5-4 3 2v3l4 2v5l-4 3-8-4z" fill="#3d74b6" stroke="#173a6b" /><path d="M1 5l4 2v7M5 7l4-2" stroke="#173a6b" /></Svg>}
      >
        <span className="font-semibold underline underline-offset-2">SheetMetal001</span>
      </TreeItem>
      <TreeItem
        className="pl-[45px]"
        arrow={<Svg w={10} h={11}><path d="M0 0l10 5.500L0 11l3-5.500z" fill="#6a7179" /></Svg>}
        icon={<Svg w={15} h={16}><path d="M6 1v8h9M6 9l-5 6" stroke="#5a6168" strokeWidth="1.800" /></Svg>}
      >
        Origin
      </TreeItem>
      <TreeItem
        className="pl-[45px]"
        arrow={<span className="mb-[14px] h-[14px] w-[9px] border-b border-l border-[#9ca3ab]" />}
        icon={<SketchIcon size={15} />}
      >
        Sketch
      </TreeItem>
    </ul>
  );
}

const note = [
  ["Note the alignment lines in the example to the left."],
  [
    "This is the most complicated Task Panel in the workbench",
    "due to the high number of parameters involved. Emphasis",
    "was placed on clarity, space, and managing complexity. This",
    "will likely serve as the template for new guidance written to",
    "FreeCAD’s design guide.",
  ],
  [
    "If possible the ‘Advanced Flange Parameters’ QSInt rollup",
    "should be collapsed by default when the task is initiated.",
  ],
  [
    "It is also recommended that the task be persistent, allowing",
    "for the rapid creation of multiple consecutive flanges until the",
    "user is ready to move on to other functions.",
  ],
];

function Canvas() {
  return (
    <main className="relative flex-1 overflow-hidden bg-[radial-gradient(ellipse_68%_85%_at_42%_58%,#f3f4f5_0%,#eceeef_28%,#e2e5e8_55%,#dadee2_78%,#d3d8e0_100%)]">
      <Tree />
      <svg width="1000" height="700" viewBox="0 0 1000 700" fill="none" className="absolute top-[300px] left-[800px]" aria-hidden="true">
        <path d="M24 311L262 75L600 180M24 311L400 432" stroke="#5c6167" strokeWidth="1.500" />
        <circle cx="24" cy="311" r="2.500" fill="#202428" />
        <circle cx="262" cy="75" r="2.500" fill="#202428" />
      </svg>
      <section className={`absolute top-[386px] left-[957px] w-[917px] border-2 border-[#3f6fa9] bg-[#729fcf] px-[23px] pt-[23px] pb-[21px] text-[32px] leading-[36px] text-black ${SANS}`}>
        {note.map((lines, i) => (
          <p key={i} className={i ? "mt-[36px]" : ""}>
            {lines.map((l) => (
              <span key={l} className="block whitespace-nowrap">{l}</span>
            ))}
          </p>
        ))}
      </section>
      <div className="absolute top-[271px] left-[411px] bg-[#d3d8de]/50 p-[6px]">
        <CompactPanel />
        <span className="absolute inset-y-0 left-[37px] w-px bg-[#4a93cf]" />
        <span className="absolute inset-y-0 left-[140px] w-px bg-[#4a93cf]" />
        <span className="absolute inset-y-0 left-[148px] w-px bg-[#4a93cf]" />
        <span className="absolute inset-y-0 left-[260px] w-px bg-[#4a93cf]" />
      </div>
      <div className="absolute top-[169px] right-[20px]">
        <LargePanel />
      </div>
      <NavCube />
      <svg width="12" height="18" viewBox="0 0 12 18" className="absolute top-[295px] left-[1816px]" aria-hidden="true">
        <path d="M1 1v14l3.500-3 2.500 5 2.500-1-1-4 2-2z" fill="#3a3e42" />
      </svg>
      <svg width="160" height="230" viewBox="0 0 160 230" className="absolute top-[4px] left-[163px]" aria-hidden="true">
        <path d="M9 0h16l25 15-15 9 115 185-7 4L26 30l-13 9z" fill="#ff3b3b" />
      </svg>
    </main>
  );
}

/* ---------- bottom bars ---------- */

function Close() {
  return (
    <Svg w={11} h={11}>
      <path d="M1 1l9 9M10 1l-9 9" stroke="#6b7680" strokeWidth="1.600" />
    </Svg>
  );
}

function DocTabs() {
  return (
    <div role="tablist" className="flex gap-[8px] border-t-2 border-[#b4bac3] bg-[#cdd3db] pt-[2px] pb-[3px] pl-[4px] text-[13px] font-medium text-[#343a40]">
      <button type="button" role="tab" className="flex h-[30px] w-[146px] items-center rounded-[4px] border border-[#8f969e] bg-[#abb2ba] pr-[7px] pl-[12px]">
        <FreeCadLogo size={17} />
        <span className="ml-[9px] flex-1 text-left whitespace-nowrap">Start page</span>
        <Close />
      </button>
      <button type="button" role="tab" aria-selected="true" className="flex h-[30px] w-[168px] items-center rounded-[4px] border border-[#5fa6e8] bg-[#74bffc] pr-[7px] pl-[13px] text-[#1f3347]">
        <DocIcon />
        <span className="ml-[11px] flex-1 text-left whitespace-nowrap">Unnamed : 1*</span>
        <Close />
      </button>
    </div>
  );
}

const Tick = (
  <Svg w={7} h={5} className="absolute right-[3px] bottom-[5px]">
    <path d="M0 0h7L3.500 5z" fill="#70777f" />
  </Svg>
);

function StatusBar() {
  const btn = "relative flex h-[28px] items-center rounded-[3px] border border-[#979ea6] bg-[#abb2ba]";
  return (
    <footer className="flex h-[33px] items-center border-t border-[#b7bdc5] bg-[#cdd3db] pr-[3px] text-[13px] text-[#4a5056]">
      <span className="flex-1 pt-[3px] pl-[2px] whitespace-nowrap">Preselected: Unnamed.Body.Sketch.Edge4 (-30.00 mm, 17.19 mm, 0.00 mm)</span>
      <div className="flex gap-[5px]">
        <button type="button" aria-label="Display" className={`${btn} w-[42px] pl-[5px]`}>
          <Svg w={16} h={16}>
            <rect width="16" height="16" fill="#eef1f4" />
            <rect x="3" y="4" width="10" height="9" fill="#1f4c96" />
          </Svg>
          {Tick}
        </button>
        <button type="button" className={`${btn} w-[114px] gap-[5px] pl-[13px]`}>
          <Svg w={11} h={15}>
            <rect x="1" y="1" width="9" height="13" rx="4" stroke="#4a5056" strokeWidth="1.400" />
            <path d="M5.500 3v4" stroke="#4a5056" strokeWidth="1.400" />
          </Svg>
          TinkerCAD
          {Tick}
        </button>
        <button type="button" className={`${btn} w-[174px] pl-[5px] whitespace-nowrap`}>
          210.50 mm x 100.00 mm
          {Tick}
        </button>
      </div>
    </footer>
  );
}

function Firefox({ badge }) {
  return (
    <Svg w={36} h={32}>
      <defs>
        <linearGradient id="fox" x1="0.8" y1="0" x2="0.2" y2="1">
          <stop offset="0" stopColor="#fff05a" />
          <stop offset="0.45" stopColor="#ff9a2b" />
          <stop offset="1" stopColor="#f0325f" />
        </linearGradient>
      </defs>
      <path d="M19 1c4 3 6 5 8 9 0-2 0-3-1-4 5 4 7 8 6 13-1 7-7 12-15 12S2 25 2 17c0-5 1-8 4-11 0 2 1 3 2 3 2-2 4-2 7-2 0-2 2-5 4-6z" fill="url(#fox)" />
      <circle cx="17" cy="17" r="6" fill="#7a4bd4" />
      <path d="M8 13c3-2 6-1 8 1-2 1-3 2-5 2 1 5 7 6 11 3-1 5-6 7-10 5s-5-7-4-11z" fill="#ff7a3a" />
      {badge && <circle cx="29" cy="7" r="5.500" fill="#c7cacd" stroke="#8f9295" />}
      {badge && <path d="M24 7h10M29 2v10" stroke="#8f9295" strokeWidth="0.8" />}
    </Svg>
  );
}

const apps = [
  ["Launcher", "w-[44px]", "", (
    <Svg w={26} h={26}>
      <circle cx="5" cy="13" r="2.500" fill="#fff" />
      <circle cx="8" cy="3" r="1.600" fill="#fff" />
      <circle cx="11" cy="22" r="3" fill="#fff" />
      <path d="M17 4l6 5-6 5" stroke="#fff" strokeWidth="3" />
    </Svg>
  )],
  ["Firefox", "w-[48px]", "", <Firefox />],
  ["Files", "w-[51px]", "bg-[#505458]", (
    <Svg w={32} h={28}>
      <path d="M1 1h12l2 3h16v8H1z" fill="#5f4d9d" />
      <path d="M3 5h26v6H3z" fill="#f2f1f6" />
      <path d="M1 8h12l3 2h15v17H1z" fill="#8572bd" />
    </Svg>
  )],
  ["Terminal", "w-[54px]", "", (
    <Svg w={28} h={28}>
      <rect width="28" height="28" rx="1" fill="#475252" />
      <path d="M12 8l5 6-5 6" stroke="#b4bbbb" strokeWidth="1.500" />
    </Svg>
  )],
  ["FreeCAD", "w-[50px]", "bg-[#6c5a94]", <FreeCadLogo size={32} />],
  ["Firefox private", "w-[53px]", "bg-[#4a4d51]", <Firefox badge />],
  ["Inkscape", "w-[52px]", "bg-[#4a4d51] border-l border-[#3c3f43]", (
    <Svg w={30} h={28}>
      <path d="M1 14L15 1l14 13c1 2-2 3-4 3l2 3-12 7-6-4 2-3-8-2c-2-1-2-3-2-4z" fill="#303336" />
      <path d="M15 2l6 6-3 5-3-3-4 4-4-3z" fill="#eef0f1" />
    </Svg>
  )],
  ["FileZilla", "w-[50px]", "bg-[#5a5d61]", (
    <Svg w={33} h={28}>
      <path d="M1 3h10l3 3h18v21H1z" fill="#c9303f" />
      <path d="M1 9h31v18H1z" fill="#dd3a4a" />
      <text x="10" y="22" fontSize="13" fontWeight="700" fill="#f7dfe1" className={SANS}>Fz</text>
    </Svg>
  )],
  ["Downloads", "w-[53px]", "bg-[#4a4d51] border-l border-[#3c3f43]", (
    <Svg w={28} h={28}>
      <circle cx="14" cy="14" r="12.500" fill="#e6e9e4" stroke="#52b52b" strokeWidth="1.500" />
      <path d="M10.500 6h7v7h4L14 22l-7.500-9h4z" fill="#58cf2c" />
    </Svg>
  )],
];

function SlideControls() {
  return (
    <div className="pointer-events-none absolute bottom-0 left-0 h-[79px] w-[454px] bg-white/15">
      <Svg w={454} h={79}>
        <path d="M51 27L39 41l12 14M131 27l12 14-12 14M397 28l22 24M419 28l-22 24" stroke="#000" strokeOpacity="0.45" strokeWidth="1.500" />
        <path d="M79 28h9v23h-9zM93 28h9v23h-9z" fill="#000" fillOpacity="0.4" />
      </Svg>
      <span className={`absolute top-[26px] left-[205px] text-[24px] leading-[26px] whitespace-nowrap text-black/40 ${SANS}`}>Slide 5 of 11</span>
    </div>
  );
}

const W = { stroke: "#d9dbdd", strokeWidth: 1.4 };

const tray = [
  ["Security", <Svg w={18} h={20}><path d="M9 0l8 3v7c0 5-4 8-8 10-4-2-8-5-8-10V3z" fill="#f6090c" /><path d="M9 4v2M9 8v7" stroke="#5d0506" strokeWidth="2.500" /></Svg>],
  ["Clipboard", <Svg w={16} h={18}><rect x="1" y="3" width="14" height="14" {...W} /><path d="M3 1h10v5H3z" fill="#e5e6e7" /><path d="M4 9h8M4 12h5" {...W} /></Svg>],
  ["Volume", <Svg w={18} h={18}><path d="M1 6h4l5-5v16l-5-5H1z" fill="#f0f1f2" /><path d="M12 5c2 2 2 6 0 8" {...W} /><path d="M14 2c4 4 4 10 0 14" stroke="#6a6e72" /></Svg>],
  ["Bluetooth", <Svg w={24} h={18}><path d="M7 5l9 8-4 4V1l4 4-9 8" {...W} /><circle cx="2" cy="9" r="1" fill="#d9dbdd" /><circle cx="5.500" cy="9" r="1" fill="#d9dbdd" /><circle cx="18.500" cy="9" r="1" fill="#d9dbdd" /><circle cx="22" cy="9" r="1" fill="#d9dbdd" /></Svg>],
  ["Network", <Svg w={20} h={18}><path d="M1 6c5-5 13-5 18 0M4 9c3.500-3.500 8.500-3.500 12 0" stroke="#8b8f92" strokeWidth="1.400" /><path d="M6.500 12c2-2 5-2 7 0" {...W} /><circle cx="10" cy="15" r="1.800" {...W} /></Svg>],
  ["Battery", <Svg w={21} h={14}><rect x="1" y="1" width="17" height="12" stroke="#c63a46" strokeWidth="1.400" /><path d="M20 4v6M3.500 4v6" stroke="#c63a46" strokeWidth="1.400" /><path d="M7 7l5-4v2.500h3v3h-3V11z" fill="#2fbf71" /></Svg>],
  ["Show hidden icons", <Svg w={14} h={8}><path d="M1 7l6-6 6 6" {...W} /></Svg>],
];

function TaskBar() {
  return (
    <div className="relative flex h-[44px] items-stretch bg-[#2b2f33] text-[#eceded]">
      {apps.map(([name, w, bg, icon]) => (
        <button key={name} type="button" aria-label={name} className={`flex items-center justify-center ${w} ${bg || "bg-[#2f3337]"}`}>
          {icon}
        </button>
      ))}
      <div className="flex-1" />
      <div className="flex items-center">
        {tray.map(([name, icon]) => (
          <button key={name} type="button" aria-label={name} className="flex w-[30px] items-center justify-center">
            {icon}
          </button>
        ))}
      </div>
      <button type="button" className="mr-[2px] flex w-[74px] flex-col items-center justify-center whitespace-nowrap">
        <span className="text-[16px] leading-[17px]">11:08 PM</span>
        <span className="text-[12px] leading-[13px]">2/23/24</span>
      </button>
      <button type="button" aria-label="Show desktop" className="flex w-[55px] items-center justify-center">
        <Svg w={17} h={17}>
          <path d="M1 1h15v15H1zM1 13h15" {...W} />
        </Svg>
      </button>
      <SlideControls />
    </div>
  );
}

/* ---------- page ---------- */

const menus = ["File", "Edit", "View", "Tools", "Macro", "Sheet Metal", "Windows", "Help", "Accessories"];
const plain = ["Sheet Metal", "Accessories"];

function ToolButton({ item: [name, w, icon] }) {
  return (
    <button type="button" aria-label={name} className={`flex h-full items-center justify-center ${w}`}>
      {icon}
    </button>
  );
}

export default function App() {
  return (
    <div className={`flex min-h-screen flex-col border-t border-t-white bg-[#cdd3db] ${NOTO}`}>
      <header>
        <div className="relative flex h-[29px] items-center justify-center bg-[#30363e] text-[13px] text-[#e3e5e7]">
          <span className="absolute left-[3px]"><FreeCadLogo size={19} /></span>
          FreeCAD 0.22.0dev
          <div className="absolute right-[10px] flex items-center gap-[12px]">
            <button type="button" aria-label="Minimise"><Svg w={12} h={8}><path d="M1 1l5 6 5-6" {...W} /></Svg></button>
            <button type="button" aria-label="Restore"><Svg w={12} h={12}><path d="M6 1l5 5-5 5-5-5z" {...W} /></Svg></button>
            <button type="button" aria-label="Close window"><Svg w={12} h={12}><path d="M1 1l10 10M11 1L1 11" {...W} /></Svg></button>
          </div>
        </div>
        <nav aria-label="Menu" className="flex h-[28px] items-center gap-[13px] border-b border-[#bcc3cb] bg-[#dfe3e7] pl-[9px] text-[13px] text-[#5b6168]">
          {menus.map((m) => (
            <button key={m} type="button">
              {plain.includes(m) ? m : (
                <>
                  <span className="underline underline-offset-3">{m[0]}</span>
                  {m.slice(1)}
                </>
              )}
            </button>
          ))}
        </nav>
        <div className="flex h-[32px] items-center gap-[7px] pl-[4px]">
          <Grip vertical />
          {workbenches.map(([name, w]) => (
            <button
              key={name}
              type="button"
              className={`flex h-[29px] shrink-0 items-center gap-[2px] rounded-[3px] border pl-[4px] text-[13px] font-semibold whitespace-nowrap ${w} ${
                name === "Sheet Metal" ? "border-[#5fa9ea] bg-[#74bffc] text-[#1c3247]" : "border-[#949ba3] bg-[#abb2ba] text-[#3c4249]"
              }`}
            >
              {wbIcons[name]}
              {name}
            </button>
          ))}
          <button type="button" aria-label="More workbenches" className="flex h-[29px] w-[41px] items-center justify-center rounded-[3px] border border-[#949ba3] bg-[#abb2ba]">
            <Svg w={28} h={22}>
              <path d="M6 4V1h14v14M3 7V4h14v14" stroke="#6b727a" strokeWidth="1.500" />
              <rect x="1" y="7" width="13" height="14" fill="#8d949c" stroke="#4e555c" strokeWidth="1.500" />
              <path d="M21 16h6l-3 4z" fill="#5a6168" />
            </Svg>
          </button>
        </div>
        <div className="flex h-[45px] items-center border-b border-[#aeb5be] pt-[3px] pl-[4px]">
          <Grip vertical />
          <span className="w-[11px]" />
          {tools.map((t) => <ToolButton key={t[0]} item={t} />)}
          <span className="mr-[5px] ml-[24px] h-[27px] w-px bg-[#a2a9b1]" />
          {partTools.map((t) => <ToolButton key={t[0]} item={t} />)}
        </div>
      </header>
      <div className="flex flex-1">
        <SideBar />
        <div className="flex min-w-0 flex-1 flex-col">
          <Canvas />
          <DocTabs />
        </div>
      </div>
      <StatusBar />
      <TaskBar />
      <span className="pointer-events-none fixed inset-y-0 right-0 w-[2px] bg-black" />
    </div>
  );
}
